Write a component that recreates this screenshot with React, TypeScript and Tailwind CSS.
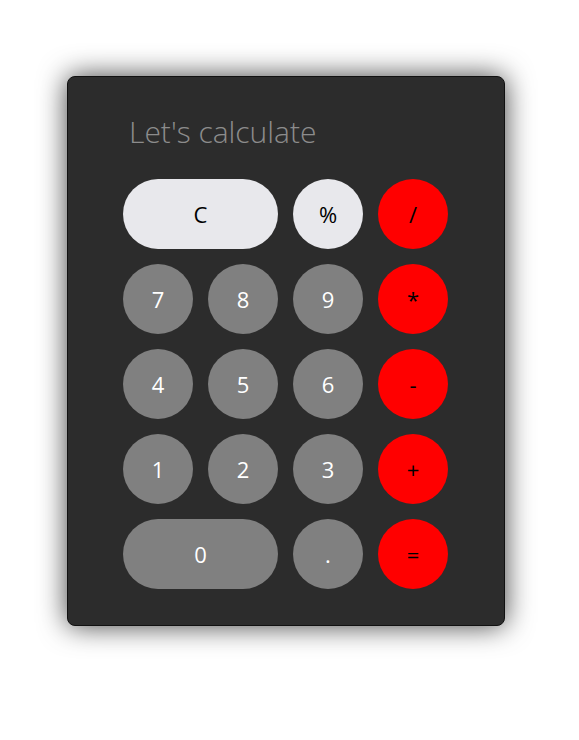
import React from "react";

type K = { label: string; kind: "light" | "gray" | "red"; wide?: boolean };

const keys: K[] = [
  { label: "C", kind: "light", wide: true },
  { label: "%", kind: "light" },
  { label: "/", kind: "red" },
  { label: "7", kind: "gray" },
  { label: "8", kind: "gray" },
  { label: "9", kind: "gray" },
  { label: "*", kind: "red" },
  { label: "4", kind: "gray" },
  { label: "5", kind: "gray" },
  { label: "6", kind: "gray" },
  { label: "-", kind: "red" },
  { label: "1", kind: "gray" },
  { label: "2", kind: "gray" },
  { label: "3", kind: "gray" },
  { label: "+", kind: "red" },
  { label: "0", kind: "gray", wide: true },
  { label: ".", kind: "gray" },
  { label: "=", kind: "red" },
];

const kindCls: Record<K["kind"], string> = {
  light: "bg-[#e8e8ec] text-black",
  gray: "bg-[#808080] text-white",
  red: "bg-[#ff0000] text-black",
};

export default function App() {
  return (
    <div
      className="w-[579px] h-[740px] bg-white pt-[76px] pl-[67px]"
      style={{ fontFamily: '"Open Sans", "Noto Sans", sans-serif' }}
    >
      <div className="w-[438px] h-[550px] bg-[#2c2c2c] border border-[#111] rounded-[8px] shadow-[0_0_28px_rgba(0,0,0,0.75)] pl-[55px] pt-[35px]">
        <div className="pl-[6px] text-[30px] leading-[40px] font-light text-[#8c8c8c] h-[40px]">
          Let's calculate
        </div>
        <div className="mt-[27px] grid grid-cols-[70px_70px_70px_70px] gap-[15px]">
          {keys.map((k) => (
            <div
              key={k.label}
              className={`h-[70px] rounded-full flex items-center justify-center text-[22px] ${kindCls[k.kind]} ${k.wide ? "col-span-2" : ""}`}
            >
              {k.label}
            </div>
          ))}
        </div>
      </div>
    </div>
  );
}
